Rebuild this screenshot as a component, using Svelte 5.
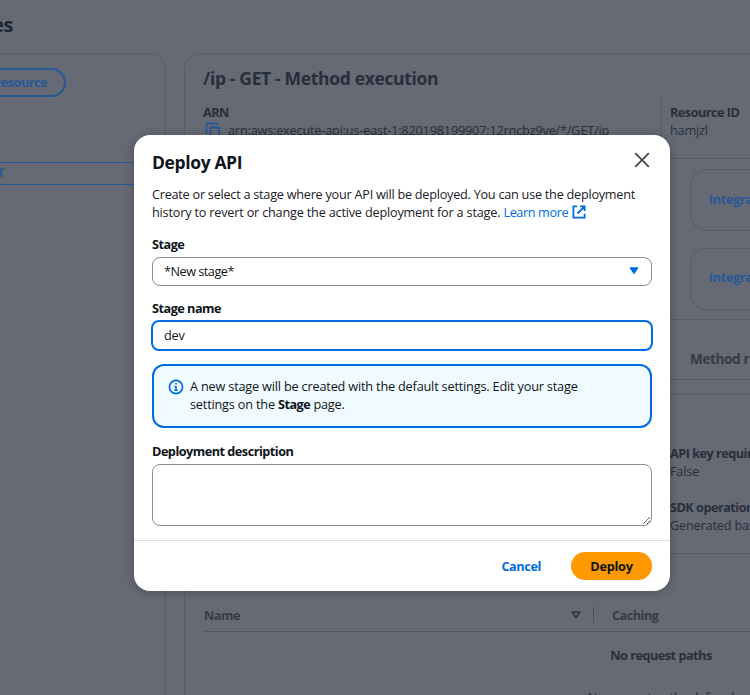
<script>
  let stageName = $state('dev');
  let description = $state('');
  const integrations = ['Integration request', 'Integration response'];
</script>

<div class="screen">
  <div class="page" aria-hidden="true">
    <h1>Resources</h1>
    <div class="columns">
      <aside class="panel tree">
        <span class="create">Create resource</span>
        <div class="selected">GET</div>
      </aside>
      <main class="panel method">
        <h2>/ip - GET - Method execution</h2>
        <div class="summary">
          <div class="arn">
            <b>ARN</b>
            <div class="value">
              <svg width="16" height="16" viewBox="0 0 16 16" fill="none" stroke="#285895" stroke-width="1.8"><path d="M1.5 12V1.5H13M5.5 5.5H14V15H5.5Z" /></svg>
              <span>arn:aws:execute-api:us-east-1:820198199907:12rncbz9ve/*/GET/ip</span>
            </div>
          </div>
          <div class="rid"><b>Resource ID</b><span>hamjzl</span></div>
        </div>
        <div class="flow">
          {#each integrations as item}
            <div class="node">{item}</div>
          {/each}
        </div>
        <div class="tabs"><span>Method request</span></div>
        <div class="settings">
          <div class="pair"><b>API key required</b><span>False</span></div>
          <div class="pair"><b>SDK operation name</b><span>Generated based on method and path</span></div>
        </div>
        <div class="table">
          <div class="head">
            <span class="name">Name</span>
            <svg width="10" height="8" viewBox="0 0 10 8" fill="none" stroke="#2d333e" stroke-width="1.6"><path d="M1.3 1.2H8.7L5 6.5Z" /></svg>
            <i></i>
            <span>Caching</span>
          </div>
          <div class="empty"><b>No request paths</b><span>No request paths defined</span></div>
        </div>
      </main>
    </div>
  </div>

  <div class="modal" role="dialog" aria-labelledby="title">
    <div class="body">
      <header>
        <h3 id="title">Deploy API</h3>
        <button class="close" aria-label="Close">
          <svg width="16" height="16" viewBox="0 0 16 16" fill="none" stroke="#424650" stroke-width="1.8"><path d="M1.2 1.2L14.8 14.8M14.8 1.2L1.2 14.8" /></svg>
        </button>
      </header>
      <p class="intro">
        <span class="l1">Create or select a stage where your API will be deployed. You can use the deployment</span><br />
        <span class="l2">history to revert or change the active deployment for a stage.</span>
        <span class="link">Learn more</span><svg class="ext" width="14" height="14" viewBox="0 0 14 14" fill="none" stroke="#006ce0" stroke-width="1.8"><path d="M5.2 1.4H1.4V12.6H12.6V8.8M8 1.4H12.6V6M12.4 1.6L5.5 8.5" /></svg>
      </p>
      <div class="label stage">Stage</div>
      <div class="select">
        <span>*New stage*</span>
        <svg width="10" height="8" viewBox="0 0 10 8"><path d="M1 .8H9L5 6.8Z" fill="#006ce0" stroke="#006ce0" stroke-linejoin="round" /></svg>
      </div>
      <label class="label name" for="stage-name">Stage name</label>
      <input id="stage-name" bind:value={stageName} />
      <div class="alert">
        <svg width="16" height="16" viewBox="0 0 16 16" fill="none" stroke="#006ce0" stroke-width="1.7"><circle cx="8" cy="8" r="6.6" /><path d="M8 4V5.6M6.4 7.5H8V11M6.2 11.2H9.8" stroke-width="1.5" /></svg>
        <div>A new stage will be created with the default settings. Edit your stage<br />settings on the <b>Stage</b> page.</div>
      </div>
      <label class="label desc" for="description">Deployment description</label>
      <textarea id="description" bind:value={description}></textarea>
    </div>
    <footer>
      <button class="cancel">Cancel</button>
      <button class="deploy">Deploy</button>
    </footer>
  </div>
</div>

<style>
  :global(body) { margin: 0; }
  .screen, .screen * { box-sizing: border-box; }
  .screen {
    position: relative; width: 750px; height: 695px; overflow: hidden;
    background: #656a75; color: #292f3a;
    font: 12.7px/18px "Open Sans", "Noto Sans", sans-serif;
    letter-spacing: -.18px;
    white-space: nowrap;
  }
  button, input, textarea { font: inherit; letter-spacing: inherit; }
  b, .label, footer button, .create, .selected, .node, .tabs, .head { font-weight: 700; letter-spacing: -.51px; }
  h1, h2, h3, p { margin: 0; }
  .page { height: 695px; }
  h1 { height: 53px; padding-top: 13px; width: 13px; display: flex; justify-content: flex-end; font-size: 20px; line-height: 24px; color: #202631; letter-spacing: -.5px; }
  .columns { display: flex; gap: 18px; width: 900px; height: 660px; }
  .panel { border: 1px solid #575c68; border-radius: 16px; }
  .tree { width: 196px; margin-left: -30px; flex: none; }
  .create { margin: 14px 0 0 -31px; display: flex; align-items: center; justify-content: flex-end; width: 126px; height: 29px; padding: 0 17px 1px 0; border: 2px solid #285895; border-radius: 15px; color: #285895; }
  .selected { margin-top: 65px; height: 23px; border: solid #285895; border-width: 1px 0; color: #285895; width: 195px; line-height: 19px; padding-left: 11px; }
  .method { flex: 1; display: flex; flex-direction: column; }
  h2 { font-size: 17.5px; line-height: 24px; margin: 12px 0 0 18px; letter-spacing: -.34px; }
  .summary { display: flex; margin: 5px 0 0 18px; height: 63px; }
  .arn { width: 458px; padding-top: 8px; }
  .arn b { display: block; }
  .value { display: flex; gap: 7px; padding-left: 2px; }
  .value svg { margin-top: 1px; }
  .rid { border-left: 1px solid #575c68; padding: 8px 0 0 8px; display: flex; flex-direction: column; }
  .flow { border-top: 1px solid #575c68; padding: 10px 0 0 505px; height: 161px; display: flex; flex-direction: column; gap: 17px; }
  .node { height: 62px; border: 1px solid #575c68; border-radius: 16px; padding: 20px 18px; color: #285895; letter-spacing: -.35px; }
  .node + .node { padding-top: 19px; }
  .tabs { height: 61px; border: solid #555a66; border-width: 1px 0; padding: 30px 0 0 505px; font-size: 13.6px; letter-spacing: -.4px; color: #353b46; }
  .settings { margin-top: 14px; height: 160px; border: solid #575c68; border-width: 1px 0; padding: 49px 0 0 485px; display: flex; flex-direction: column; gap: 18px; }
  .pair { display: flex; flex-direction: column; }
  .table { padding: 45px 0 0 19px; }
  .head { height: 33px; border-bottom: 1px solid #525763; display: flex; align-items: center; color: #353b46; padding-bottom: 1px; }
  .head .name { width: 367px; }
  .head i { height: 16px; width: 1px; background: #4c525e; margin: 0 18px 0 12px; }
  .empty { width: 914px; display: flex; flex-direction: column; align-items: center; padding-top: 14px; gap: 24px; }

  .modal {
    position: absolute; left: 134px; top: 135px; width: 536px; height: 456px;
    background: #fff; color: #0f141a; border-radius: 16px;
    box-shadow: 0 1px 10px rgba(0, 7, 22, .28);
    display: flex; flex-direction: column;
  }
  .body { height: 406px; padding: 0 18px; display: flex; flex-direction: column; }
  header { height: 50px; display: flex; justify-content: space-between; align-items: flex-start; }
  h3 { font-size: 17.5px; line-height: 24px; margin-top: 15px; letter-spacing: -.38px; }
  button { border: 0; background: none; padding: 0; }
  .close { margin: 17px 2px 0 0; height: 16px; line-height: 0; }
  .intro { height: 50px; color: #1b2027; }
  .l1 { letter-spacing: -.255px; }
  .l2 { letter-spacing: -.2px; }
  .link { color: #006ce0; letter-spacing: -.4px; }
  .ext { vertical-align: -2px; margin-left: 4px; }
  .label { height: 22px; }
  .select { height: 29px; border: 1px solid #8c8c94; border-radius: 8px; display: flex; align-items: center; justify-content: space-between; padding: 0 12px 1px 11px; letter-spacing: -.5px; }
  .name.label { margin-top: 13px; height: 21px; }
  input { height: 31px; margin: 0 -1px; border: 2px solid #006ce0; border-radius: 8px; padding: 0 11px 1px; outline: 0; color: inherit; background: #fff; }
  .alert { height: 64px; margin-top: 13px; border: 2px solid #006ce0; border-radius: 12px; background: #f0fbff; display: flex; gap: 6px; padding: 11px 14px; }
  .alert svg { margin-top: 2px; }
  .desc { margin-top: 14px; }
  textarea { height: 62px; border: 1px solid #8c8c94; border-radius: 8px; outline: 0; resize: vertical; background: #fff; }
  footer { flex: 1; border-top: 1px solid #dedee3; padding: 11px 18px; display: flex; justify-content: flex-end; gap: 30px; }
  footer button { height: 28px; }
  .cancel { color: #006ce0; }
  footer .cancel { letter-spacing: -.4px; }
  footer .deploy { width: 81px; border-radius: 14px; background: #ff9900; color: #0f141a; letter-spacing: -.25px; }
</style>
